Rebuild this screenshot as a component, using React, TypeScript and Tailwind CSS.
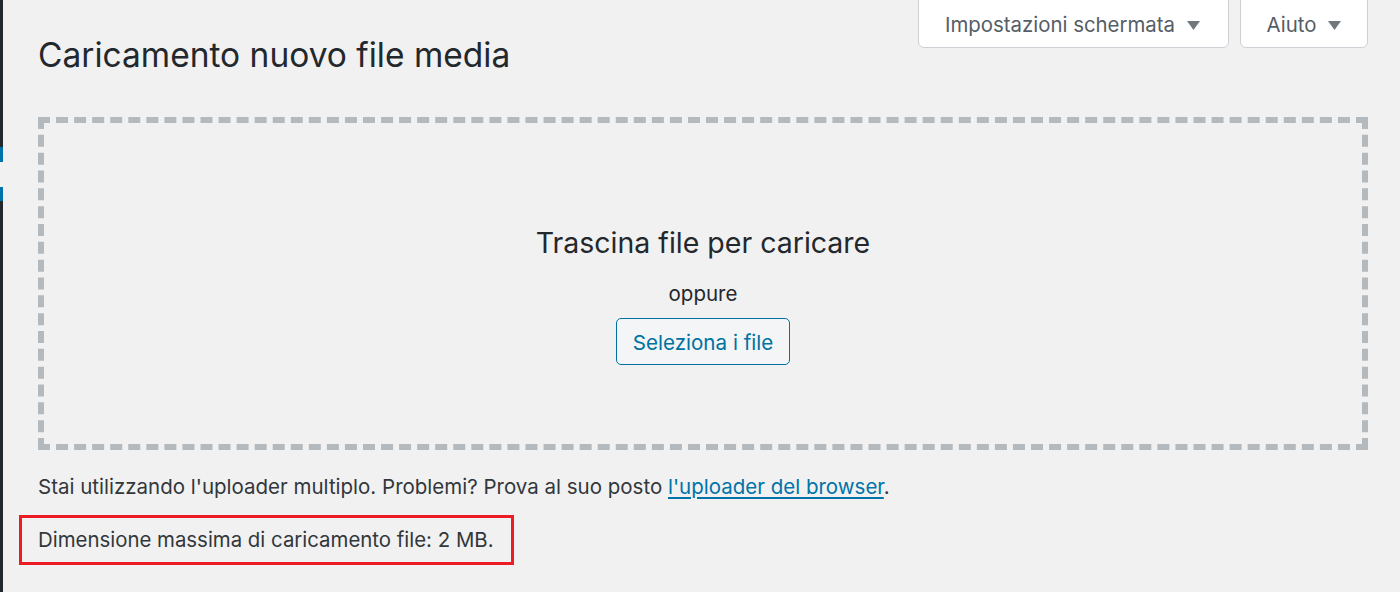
import React from "react";

function Caret() {
  return (
    <svg width="13" height="9" viewBox="0 0 13 9" className="ml-[12px] mt-[1px]">
      <path d="M0 0 L13 0 L6.5 9 Z" fill="#72777c" />
    </svg>
  );
}

export default function App() {
  return (
    <div
      className="w-[1400px] h-[592px] bg-[#f1f1f1] flex overflow-hidden"
      style={{ fontFamily: 'Inter, "Liberation Sans", Arial, sans-serif' }}
    >
      <div className="w-[3px] h-full bg-[#23282d] flex flex-col shrink-0">
        <div className="h-[147px]" />
        <div className="h-[15px] bg-[#0073aa]" />
        <div className="h-[25px] bg-[#f1f1f1]" />
        <div className="h-[14px] bg-[#0073aa]" />
      </div>
      <div className="flex-1 flex flex-col pl-[35px] pr-[32px]">
        <div className="flex items-start justify-between">
          <h1 className="mt-[35px] text-[33.5px] leading-[40px] text-[#23282d] font-normal">
            Caricamento nuovo file media
          </h1>
          <div className="flex gap-[11px] -mt-[1px]">
            <button className="h-[49px] w-[311px] bg-white border border-[#ccd0d4] rounded-b-[6px] flex items-center justify-center text-[20.4px] text-[#555d66] pt-[3px] pr-[2px]">
              Impostazioni schermata
              <Caret />
            </button>
            <button className="h-[49px] w-[128px] bg-white border border-[#ccd0d4] rounded-b-[6px] flex items-center justify-center text-[20.4px] text-[#555d66] pt-[3px]">
              Aiuto
              <Caret />
            </button>
          </div>
        </div>
        <div className="mt-[42px] h-[333px] border-[6px] border-dashed border-[#b4b9be] flex flex-col items-center pt-[102px]">
          <div className="text-[28.5px] leading-[36px] text-[#23282d]">Trascina file per caricare</div>
          <div className="mt-[19px] text-[20.5px] leading-[28px] text-[#23282d]">oppure</div>
          <button className="mt-[10px] h-[47px] px-[16px] pt-[3px] border-[1.5px] border-[#0071a1] rounded-[5px] bg-[#f3f5f6] text-[#0071a1] text-[20.6px]">
            Seleziona i file
          </button>
        </div>
        <p className="mt-[23px] text-[20.5px] leading-[28px] text-[#32373c]">
          Stai utilizzando l'uploader multiplo. Problemi? Prova al suo posto{" "}
          <a className="text-[#0073aa] underline underline-offset-[3px]" href="#">
            l'uploader del browser
          </a>
          .
        </p>
        <div className="mt-[14px] -ml-[19px] self-start border-[3px] border-[#ec1c24] pl-[16px] pr-[17px] py-[8px]">
          <p className="text-[20.4px] leading-[28px] text-[#32373c]">Dimensione massima di caricamento file: 2 MB.</p>
        </div>
      </div>
    </div>
  );
}
